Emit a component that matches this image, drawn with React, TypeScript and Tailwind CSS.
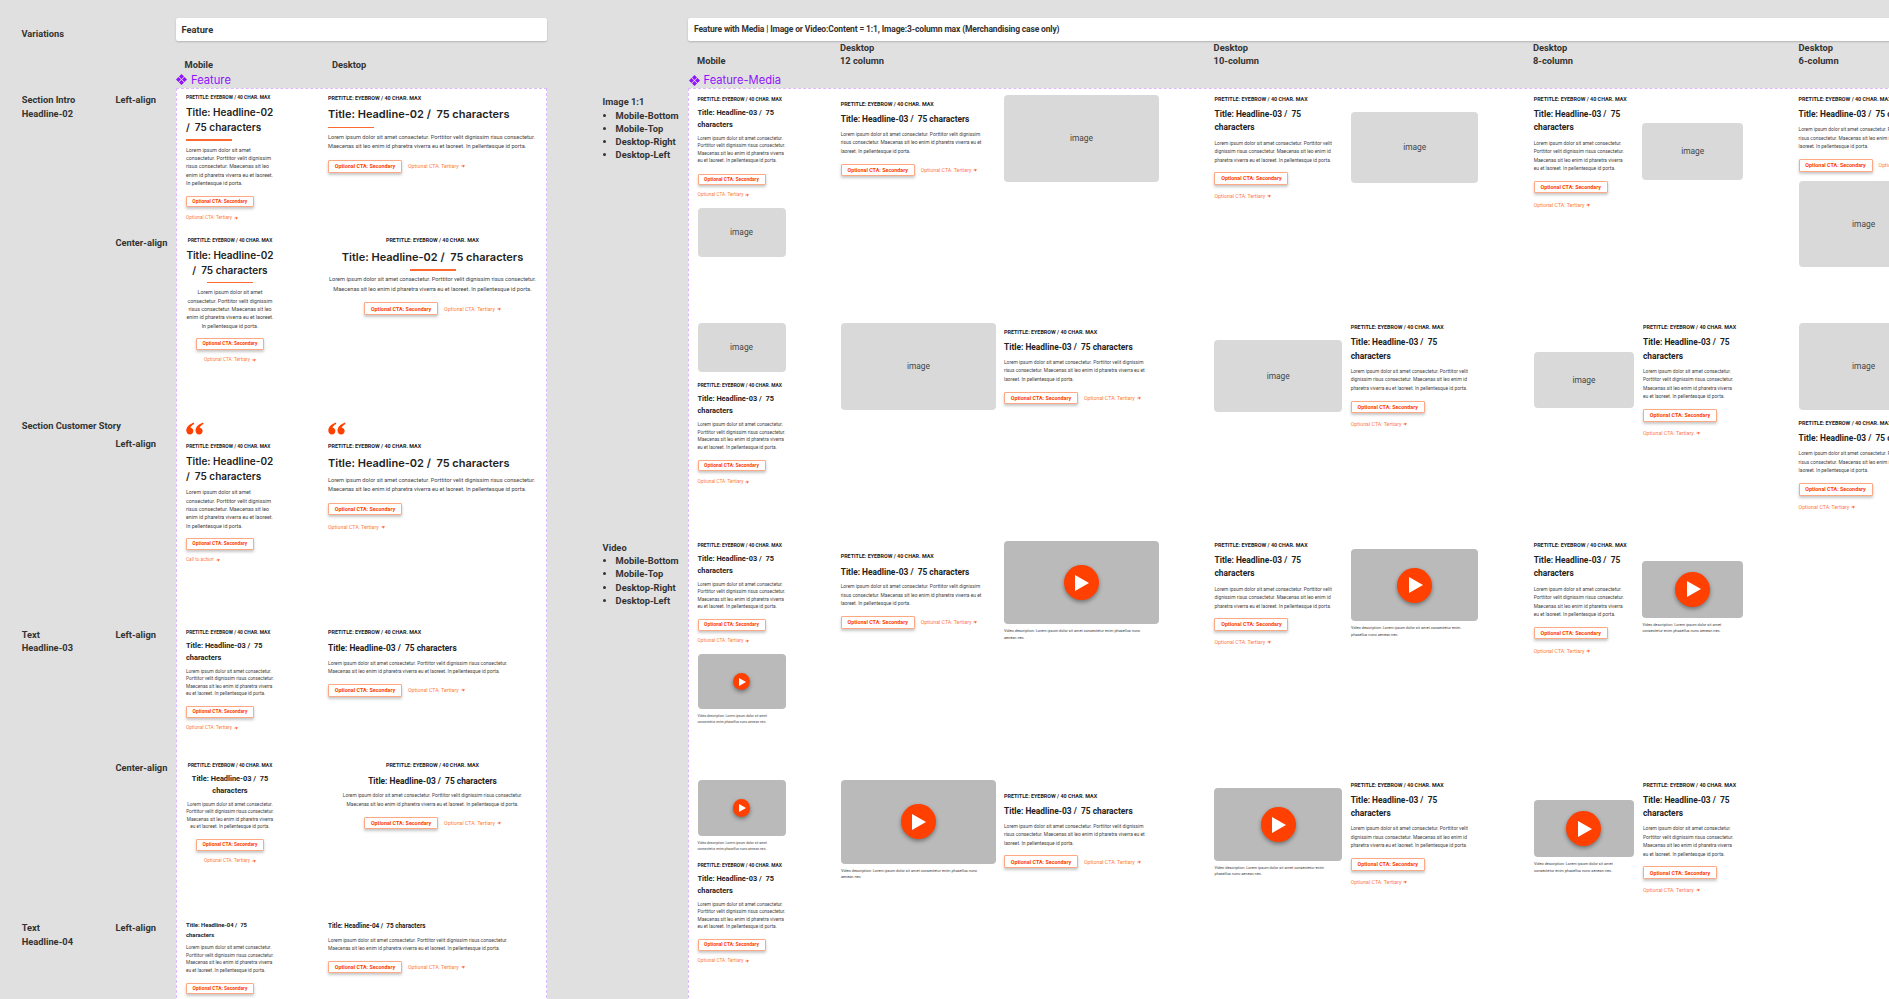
// Feature / Feature-Media variation sheet, laid out as label columns and two dashed frames
import type { ReactNode } from 'react';
import { clsx } from 'clsx';

type SizeKey = 'm2' | 'd2' | 'm3' | 'd3' | 'c3' | 'm4' | 'd4';

const SIZES: Record<SizeKey, { eyebrow: string; title: string; rule: string; body: string; ctaMt: string; cta: string; tert: string; stackMt: string }> = {
  m2: {
    eyebrow: 'text-[4.9px]',
    title: 'text-[10px] leading-[15px] mt-[5.2px] font-[Inter,sans-serif] font-semibold',
    rule: 'mt-[4px] mb-[0.45px]',
    body: 'text-[5.3px] leading-[8.33px] mt-[4.33px]',
    ctaMt: 'mt-[8.5px]',
    cta: 'w-[67.6px] h-[11.3px] text-[4.9px]',
    tert: 'text-[4.75px]',
    stackMt: 'mt-[7.4px]',
  },
  d2: {
    eyebrow: 'text-[5.4px]',
    title: 'text-[11px] leading-[15px] mt-[6.5px] font-[Inter,sans-serif] font-semibold',
    rule: 'mt-[4.5px] mb-[-0.6px]',
    body: 'text-[5.65px] leading-[9.2px] mt-[5.2px]',
    ctaMt: 'mt-[8.6px]',
    cta: 'w-[74px] h-[12.5px] text-[5.4px]',
    tert: 'text-[5.25px]',
    stackMt: 'mt-[8.3px]',
  },
  m3: {
    eyebrow: 'text-[4.9px]',
    title: 'text-[7.4px] leading-[11.7px] mt-[5.15px] font-bold',
    rule: '',
    body: 'text-[4.75px] leading-[7.5px] mt-[4.4px]',
    ctaMt: 'mt-[8.6px]',
    cta: 'w-[68px] h-[11.3px] text-[4.9px]',
    tert: 'text-[4.75px]',
    stackMt: 'mt-[7.4px]',
  },
  d3: {
    eyebrow: 'text-[5.4px]',
    title: 'text-[8.4px] leading-[12px] mt-[6.3px] font-bold',
    rule: '',
    body: 'text-[4.9px] leading-[8.4px] mt-[4.75px]',
    ctaMt: 'mt-[8.5px]',
    cta: 'w-[74px] h-[12.7px] text-[5.4px]',
    tert: 'text-[5.25px]',
    stackMt: 'mt-[8.3px]',
  },
  c3: {
    eyebrow: 'text-[5.4px]',
    title: 'text-[8.4px] leading-[13.3px] mt-[6px] font-bold',
    rule: '',
    body: 'text-[4.9px] leading-[8.4px] mt-[4.1px]',
    ctaMt: 'mt-[8.3px]',
    cta: 'w-[74px] h-[12.7px] text-[5.4px]',
    tert: 'text-[5.25px]',
    stackMt: 'mt-[8.3px]',
  },
  m4: {
    eyebrow: '',
    title: 'text-[5.9px] leading-[9.3px] font-bold',
    rule: '',
    body: 'text-[4.75px] leading-[7.6px] mt-[4.2px]',
    ctaMt: 'mt-[8.5px]',
    cta: 'w-[68px] h-[11.4px] text-[4.9px]',
    tert: 'text-[4.75px]',
    stackMt: 'mt-[7.4px]',
  },
  d4: {
    eyebrow: '',
    title: 'text-[6.35px] leading-[9.3px] font-bold',
    rule: '',
    body: 'text-[4.9px] leading-[8.4px] mt-[4.75px]',
    ctaMt: 'mt-[8.1px]',
    cta: 'w-[74px] h-[12.7px] text-[5.4px]',
    tert: 'text-[5.25px]',
    stackMt: 'mt-[8.3px]',
  },
};

const FEATURE_ROWS = 'grid-rows-[142.5px_185px_207px_133px_159px_1fr]';

const TITLE_02_M = ['Title: Headline-02', '/  75 characters'];
const TITLE_02_D = ['Title: Headline-02 /  75 characters'];
const TITLE_03_M = ['Title: Headline-03 /  75', 'characters'];
const TITLE_03_D = ['Title: Headline-03 /  75 characters'];
const TITLE_04_M = ['Title: Headline-04 /  75', 'characters'];
const TITLE_04_D = ['Title: Headline-04 /  75 characters'];

const BODY_M2 = ['Lorem ipsum dolor sit amet', 'consectetur. Porttitor velit dignissim', 'risus consectetur. Maecenas sit leo', 'enim id pharetra viverra eu et laoreet.', 'In pellentesque id porta.'];
const BODY_D2 = ['Lorem ipsum dolor sit amet consectetur. Porttitor velit dignissim risus consectetur.', 'Maecenas sit leo enim id pharetra viverra eu et laoreet. In pellentesque id porta.'];
const BODY_4 = ['Lorem ipsum dolor sit amet consectetur.', 'Porttitor velit dignissim risus consectetur.', 'Maecenas sit leo enim id pharetra viverra', 'eu et laoreet. In pellentesque id porta.'];
const BODY_12 = ['Lorem ipsum dolor sit amet consectetur. Porttitor velit dignissim', 'risus consectetur. Maecenas sit leo enim id pharetra viverra eu et', 'laoreet. In pellentesque id porta.'];
const BODY_10 = ['Lorem ipsum dolor sit amet consectetur. Porttitor velit', 'dignissim risus consectetur. Maecenas sit leo enim id', 'pharetra viverra eu et laoreet. In pellentesque id porta.'];

const CAPTION_WIDE = ['Video description: Lorem ipsum dolor sit amet consectetur enim phasellus nunc', 'aenean nec.'];
const CAPTION_MID = ['Video description: Lorem ipsum dolor sit amet consectetur enim', 'phasellus nunc aenean nec.'];
const CAPTION_NARROW = ['Video description: Lorem ipsum dolor sit amet', 'consectetur enim phasellus nunc aenean nec.'];

function Lines({ lines }: { lines: string[] }) {
  return (
    <>
      {lines.map((line) => (
        <span key={line} className="block whitespace-pre">
          {line}
        </span>
      ))}
    </>
  );
}

function Tertiary({ label, className }: { label: string; className: string }) {
  return (
    <div className={clsx('flex items-center gap-[2px] leading-[6px] whitespace-nowrap text-[#ff7a45]', className)}>
      <span>{label}</span>
      <svg viewBox="0 0 8 8" className="w-[4px] h-[4px]" fill="none" stroke="#ff4000" strokeWidth="1.6">
        <path d="M1 4h5.5M4.2 1.6 6.6 4 4.2 6.4" />
      </svg>
    </div>
  );
}

interface BlockProps {
  className?: string;
  size: SizeKey;
  title: string[];
  body: string[];
  eyebrow?: boolean;
  rule?: boolean;
  center?: boolean;
  inline?: boolean;
  tertiary?: string | null;
}

function Block({ className, size, title, body, eyebrow = true, rule = false, center = false, inline = false, tertiary = 'Optional CTA: Tertiary' }: BlockProps) {
  const s = SIZES[size];
  return (
    <div className={clsx('flex flex-col', center ? 'items-center text-center' : 'items-start', className)}>
      {eyebrow && (
        <div className={clsx('leading-[6px] font-bold text-[#222] whitespace-nowrap uppercase', s.eyebrow)}>
          Pretitle: Eyebrow / 40 char. max
        </div>
      )}
      <div className={clsx('text-[#222]', s.title)}>
        <Lines lines={title} />
      </div>
      {rule && <div className={clsx('h-[1.5px] w-[46px] bg-[#ff6a33]', s.rule)} />}
      <div className={clsx('text-[#444]', s.body)}>
        <Lines lines={body} />
      </div>
      <div className={clsx('flex', inline ? 'flex-row items-center gap-[6px]' : 'flex-col', center && !inline && 'items-center', s.ctaMt)}>
        <div className={clsx('flex items-center justify-center bg-white border border-[#ffa884] rounded-[1px] font-bold text-[#ff4000] whitespace-nowrap shadow-[0_2px_3px_rgba(0,0,0,0.22)]', s.cta)}>
          Optional CTA: Secondary
        </div>
        {tertiary && <Tertiary label={tertiary} className={clsx(s.tert, !inline && s.stackMt)} />}
      </div>
    </div>
  );
}

function ImageBox({ className }: { className: string }) {
  return (
    <div className={clsx('shrink-0 flex items-center justify-center bg-[#d9d9d9] rounded-[4px] text-[8.4px] text-[#444]', className)}>
      image
    </div>
  );
}

function PlayCircle({ small = false }: { small?: boolean }) {
  return (
    <div className={clsx('flex items-center justify-center rounded-full bg-[#ff4000] shadow-[0_2px_4px_rgba(0,0,0,0.4)]', small ? 'w-[17.6px] h-[17.6px]' : 'w-[35px] h-[35px]')}>
      <svg viewBox="0 0 14 16" className={small ? 'w-[7px] h-[8px] ml-[1px]' : 'w-[14px] h-[16px] ml-[2px]'}>
        <path d="M0 0 14 8 0 16z" fill="#fff" />
      </svg>
    </div>
  );
}

function VideoBox({ boxClass, small = false, lines }: { boxClass: string; small?: boolean; lines: string[] }) {
  return (
    <div className="shrink-0 flex flex-col">
      <div className={clsx('flex items-center justify-center bg-[#bababa] rounded-[4px]', boxClass)}>
        <PlayCircle small={small} />
      </div>
      <div className={clsx('mt-[4px] text-[#444]', small ? 'text-[3.4px] leading-[6px]' : 'text-[3.85px] leading-[6.6px]')}>
        <Lines lines={lines} />
      </div>
    </div>
  );
}

function Quote() {
  return (
    <svg viewBox="0 0 18 13" className="block w-[17.5px] h-[12.5px] mb-[8px] mt-[0.5px]" fill="#ff4000">
      <path d="M8 .4C3.6 2 .2 5 .2 8.8.2 11.2 1.9 13 4 13c2 0 3.6-1.6 3.6-3.6S6.2 6 4.5 6c.4-1.5 1.9-3 4-4zM17.6.4C13.2 2 9.8 5 9.8 8.8c0 2.4 1.7 4.2 3.8 4.2 2 0 3.6-1.6 3.6-3.6S15.8 6 14.1 6c.4-1.5 1.9-3 4-4z" />
    </svg>
  );
}

function Label({ className, children }: { className?: string; children: ReactNode }) {
  return <div className={clsx('font-bold text-[9.3px] text-[#333] whitespace-nowrap', className)}>{children}</div>;
}

function ComponentTag({ className, label }: { className: string; label: string }) {
  return (
    <div className={clsx('flex items-center gap-[4px] h-[14px] text-[11.2px] text-[#9013fe] font-[Inter,sans-serif]', className)}>
      <svg viewBox="0 0 11 11" className="w-[11px] h-[11px] -ml-[0.5px]" fill="#9013fe">
        <path d="M5.5 0 8 2.5 5.5 5 3 2.5zM2.5 3 5 5.5 2.5 8 0 5.5zM8.5 3 11 5.5 8.5 8 6 5.5zM5.5 6 8 8.5 5.5 11 3 8.5z" />
      </svg>
      <span>{label}</span>
    </div>
  );
}

function Bullets({ heading }: { heading: string }) {
  return (
    <div className="leading-[13.3px] font-bold text-[9.3px] text-[#333] whitespace-nowrap">
      <div>{heading}</div>
      <ul className="list-disc pl-[13px]">
        <li>Mobile-Bottom</li>
        <li>Mobile-Top</li>
        <li>Desktop-Right</li>
        <li>Desktop-Left</li>
      </ul>
    </div>
  );
}

function HeaderBar({ className, children }: { className?: string; children: ReactNode }) {
  return (
    <div className={clsx('h-[23px] flex items-center pl-[6px] bg-white rounded-[2px] shadow-[0_1px_2px_rgba(0,0,0,0.2)] font-bold text-[#333] whitespace-nowrap', className)}>
      {children}
    </div>
  );
}

// One row of labels on the left of the Feature frame
function RowLabel({ section, align, className, sectionClass, alignClass }: { section?: ReactNode; align: string; className?: string; sectionClass?: string; alignClass?: string }) {
  return (
    <div className={clsx('flex leading-[13.6px]', className)}>
      <Label className={clsx('w-[115.4px] pl-[21.7px]', sectionClass)}>{section}</Label>
      <Label className={alignClass}>{align}</Label>
    </div>
  );
}

export default function App() {
  return (
    <div className="w-[1889px] h-[999px] overflow-hidden bg-[#e0e0e0] font-[Roboto,sans-serif] grid grid-cols-[175.5px_371.5px_141px_1300px] grid-rows-[88px_930px]">
      {/* Header: variations label */}
      <Label className="pt-[27px] pl-[21.5px] leading-[13.3px]">Variations</Label>

      {/* Header: Feature */}
      <div className="flex flex-col pt-[18px]">
        <HeaderBar className="text-[9.3px]">Feature</HeaderBar>
        <div className="flex pl-[9px] mt-[17.3px] leading-[13.3px]">
          <Label className="w-[147.4px]">Mobile</Label>
          <Label>Desktop</Label>
        </div>
        <ComponentTag className="mt-[1.4px] ml-[1px]" label="Feature" />
      </div>

      <div />

      {/* Header: Feature-Media */}
      <div className="flex flex-col pt-[18px]">
        <HeaderBar className="text-[8.5px] tracking-[-0.15px]">
          Feature with Media | Image or Video:Content = 1:1, Image:3-column max (Merchandising case only)
        </HeaderBar>
        <div className="flex pl-[9px] leading-[13.3px]">
          <Label className="w-[143px] pt-[13.3px]">Mobile</Label>
          <Label className="w-[373.6px]">Desktop<br />12 column</Label>
          <Label className="w-[319.4px]">Desktop<br />10-column</Label>
          <Label className="w-[265.6px]">Desktop<br />8-column</Label>
          <Label>Desktop<br />6-column</Label>
        </div>
        <ComponentTag className="mt-[5.7px] ml-[1px]" label="Feature-Media" />
      </div>

      {/* Feature row labels */}
      <div className={clsx('grid pt-[6.3px]', FEATURE_ROWS)}>
        <RowLabel className="-mt-[1px]" section={<>Section Intro<br />Headline-02</>} align="Left-align" />
        <RowLabel className="-mt-[1px]" align="Center-align" />
        <RowLabel className="-mt-[2.4px]" section="Section Customer Story" align="Left-align" alignClass="mt-[17.9px]" />
        <RowLabel className="-mt-[1px]" section={<>Text<br />Headline-03</>} align="Left-align" />
        <RowLabel className="-mt-[1px]" align="Center-align" />
        <RowLabel className="pt-[0.5px]" section={<>Text<br />Headline-04</>} align="Left-align" />
      </div>

      {/* Feature frame */}
      <div className={clsx('grid grid-cols-[142px_209px] pl-[9.5px] pt-[5.3px] bg-white border border-dashed border-[#dcb8ff]', FEATURE_ROWS)}>
        <Block size="m2" title={TITLE_02_M} body={BODY_M2} rule />
        <Block className="pt-[0.7px]" size="d2" title={TITLE_02_D} body={BODY_D2} rule inline />
        <Block className="w-[88px]" size="m2" title={TITLE_02_M} body={BODY_M2} rule center />
        <Block className="pt-[0.5px]" size="d2" title={TITLE_02_D} body={BODY_D2} rule center inline />
        <div>
          <Quote />
          <Block size="m2" title={TITLE_02_M} body={BODY_M2} tertiary="Call to action" />
        </div>
        <div>
          <Quote />
          <Block className="pt-[0.3px]" size="d2" title={TITLE_02_D} body={BODY_D2} />
        </div>
        <Block size="m3" title={TITLE_03_M} body={BODY_4} />
        <Block className="pt-[0.7px]" size="d3" title={TITLE_03_D} body={BODY_D2} inline />
        <Block className="w-[88px]" size="m3" title={TITLE_03_M} body={BODY_4} center />
        <Block className="pt-[0.5px]" size="d3" title={TITLE_03_D} body={BODY_D2} center inline />
        <Block className="pt-[0.5px]" size="m4" eyebrow={false} title={TITLE_04_M} body={BODY_4} tertiary={null} />
        <Block className="pt-[1px]" size="d4" eyebrow={false} title={TITLE_04_D} body={BODY_D2} inline />
      </div>

      {/* Feature-Media row labels */}
      <div className="flex flex-col gap-[379px] pl-[55.6px] pt-[7.3px]">
        <Bullets heading="Image 1:1" />
        <Bullets heading="Video" />
      </div>

      {/* Feature-Media frame */}
      <div className="grid grid-cols-[143.2px_373.8px_319.2px_264.9px_130px] grid-rows-[228px_218px_239px_1fr] pl-[8.5px] pt-[6px] bg-white border border-dashed border-[#dcb8ff]">
        {/* Image after text */}
        <div className="flex flex-col items-start gap-[9.8px] pt-[1px]">
          <Block size="m3" title={TITLE_03_M} body={BODY_4} />
          <ImageBox className="w-[88px] h-[49.3px]" />
        </div>
        <div className="flex items-center self-start gap-[14.8px]">
          <Block className="w-[148.5px]" size="d3" title={TITLE_03_D} body={BODY_12} inline />
          <ImageBox className="w-[155px] h-[87px]" />
        </div>
        <div className="flex items-center self-start gap-[10px] pt-[1px]">
          <Block className="w-[126.5px]" size="c3" title={TITLE_03_M} body={BODY_10} />
          <ImageBox className="w-[127.5px] h-[71px]" />
        </div>
        <div className="flex items-center self-start gap-[8.8px] pt-[1px]">
          <Block className="w-[100px]" size="c3" title={TITLE_03_M} body={BODY_4} />
          <ImageBox className="w-[100.5px] h-[56.7px]" />
        </div>
        <div className="flex flex-col items-start gap-[9px] pt-[1px]">
          <Block size="c3" title={TITLE_03_D} body={BODY_12} inline />
          <ImageBox className="w-[130px] h-[86.8px]" />
        </div>

        {/* Image before text */}
        <div className="flex flex-col items-start gap-[10px]">
          <ImageBox className="w-[88px] h-[49.3px]" />
          <Block size="m3" title={TITLE_03_M} body={BODY_4} />
        </div>
        <div className="flex items-center self-start gap-[8px] pl-[0.3px]">
          <ImageBox className="w-[155px] h-[87px]" />
          <Block size="d3" title={TITLE_03_D} body={BODY_12} inline />
        </div>
        <div className="flex items-center self-start gap-[8.7px] pt-[1.3px]">
          <ImageBox className="w-[127.5px] h-[71.7px]" />
          <Block size="c3" title={TITLE_03_M} body={BODY_10} />
        </div>
        <div className="flex items-center self-start gap-[9px] pt-[1.3px] pl-[0.3px]">
          <ImageBox className="w-[100px] h-[56.3px]" />
          <Block size="c3" title={TITLE_03_M} body={BODY_4} />
        </div>
        <div className="flex flex-col items-start gap-[10px]">
          <ImageBox className="w-[130px] h-[87px]" />
          <Block size="c3" title={TITLE_03_D} body={BODY_12} />
        </div>

        {/* Video after text */}
        <div className="flex flex-col items-start gap-[9.8px] pt-[0.7px]">
          <Block size="m3" title={TITLE_03_M} body={BODY_4} />
          <VideoBox boxClass="w-[88px] h-[55.7px]" small lines={CAPTION_NARROW} />
        </div>
        <div className="flex items-center self-start gap-[14.8px]">
          <Block className="w-[148.5px]" size="d3" title={TITLE_03_D} body={BODY_12} inline />
          <VideoBox boxClass="w-[155px] h-[83px]" lines={CAPTION_WIDE} />
        </div>
        <div className="flex items-center self-start gap-[10px] pt-[1px]">
          <Block className="w-[126.5px]" size="c3" title={TITLE_03_M} body={BODY_10} />
          <VideoBox boxClass="w-[127.5px] h-[72px]" lines={CAPTION_MID} />
        </div>
        <div className="flex items-center self-start gap-[8.8px] pt-[1px]">
          <Block className="w-[100px]" size="c3" title={TITLE_03_M} body={BODY_4} />
          <VideoBox boxClass="w-[100.5px] h-[57px]" lines={CAPTION_NARROW} />
        </div>
        <div />

        {/* Video before text */}
        <div className="flex flex-col items-start gap-[9.7px]">
          <VideoBox boxClass="w-[88px] h-[56px]" small lines={CAPTION_NARROW} />
          <Block size="m3" title={TITLE_03_M} body={BODY_4} />
        </div>
        <div className="flex items-center self-start gap-[8px] pl-[0.3px]">
          <VideoBox boxClass="w-[155px] h-[83.7px]" lines={CAPTION_WIDE} />
          <Block size="d3" title={TITLE_03_D} body={BODY_12} inline />
        </div>
        <div className="flex items-center self-start gap-[8.7px] pt-[1.7px]">
          <VideoBox boxClass="w-[127.5px] h-[72.4px]" lines={CAPTION_MID} />
          <Block size="c3" title={TITLE_03_M} body={BODY_10} />
        </div>
        <div className="flex items-center self-start gap-[9px] pt-[1.7px] pl-[0.3px]">
          <VideoBox boxClass="w-[100px] h-[57px]" lines={CAPTION_NARROW} />
          <Block size="c3" title={TITLE_03_M} body={BODY_4} />
        </div>
        <div />
      </div>
    </div>
  );
}
